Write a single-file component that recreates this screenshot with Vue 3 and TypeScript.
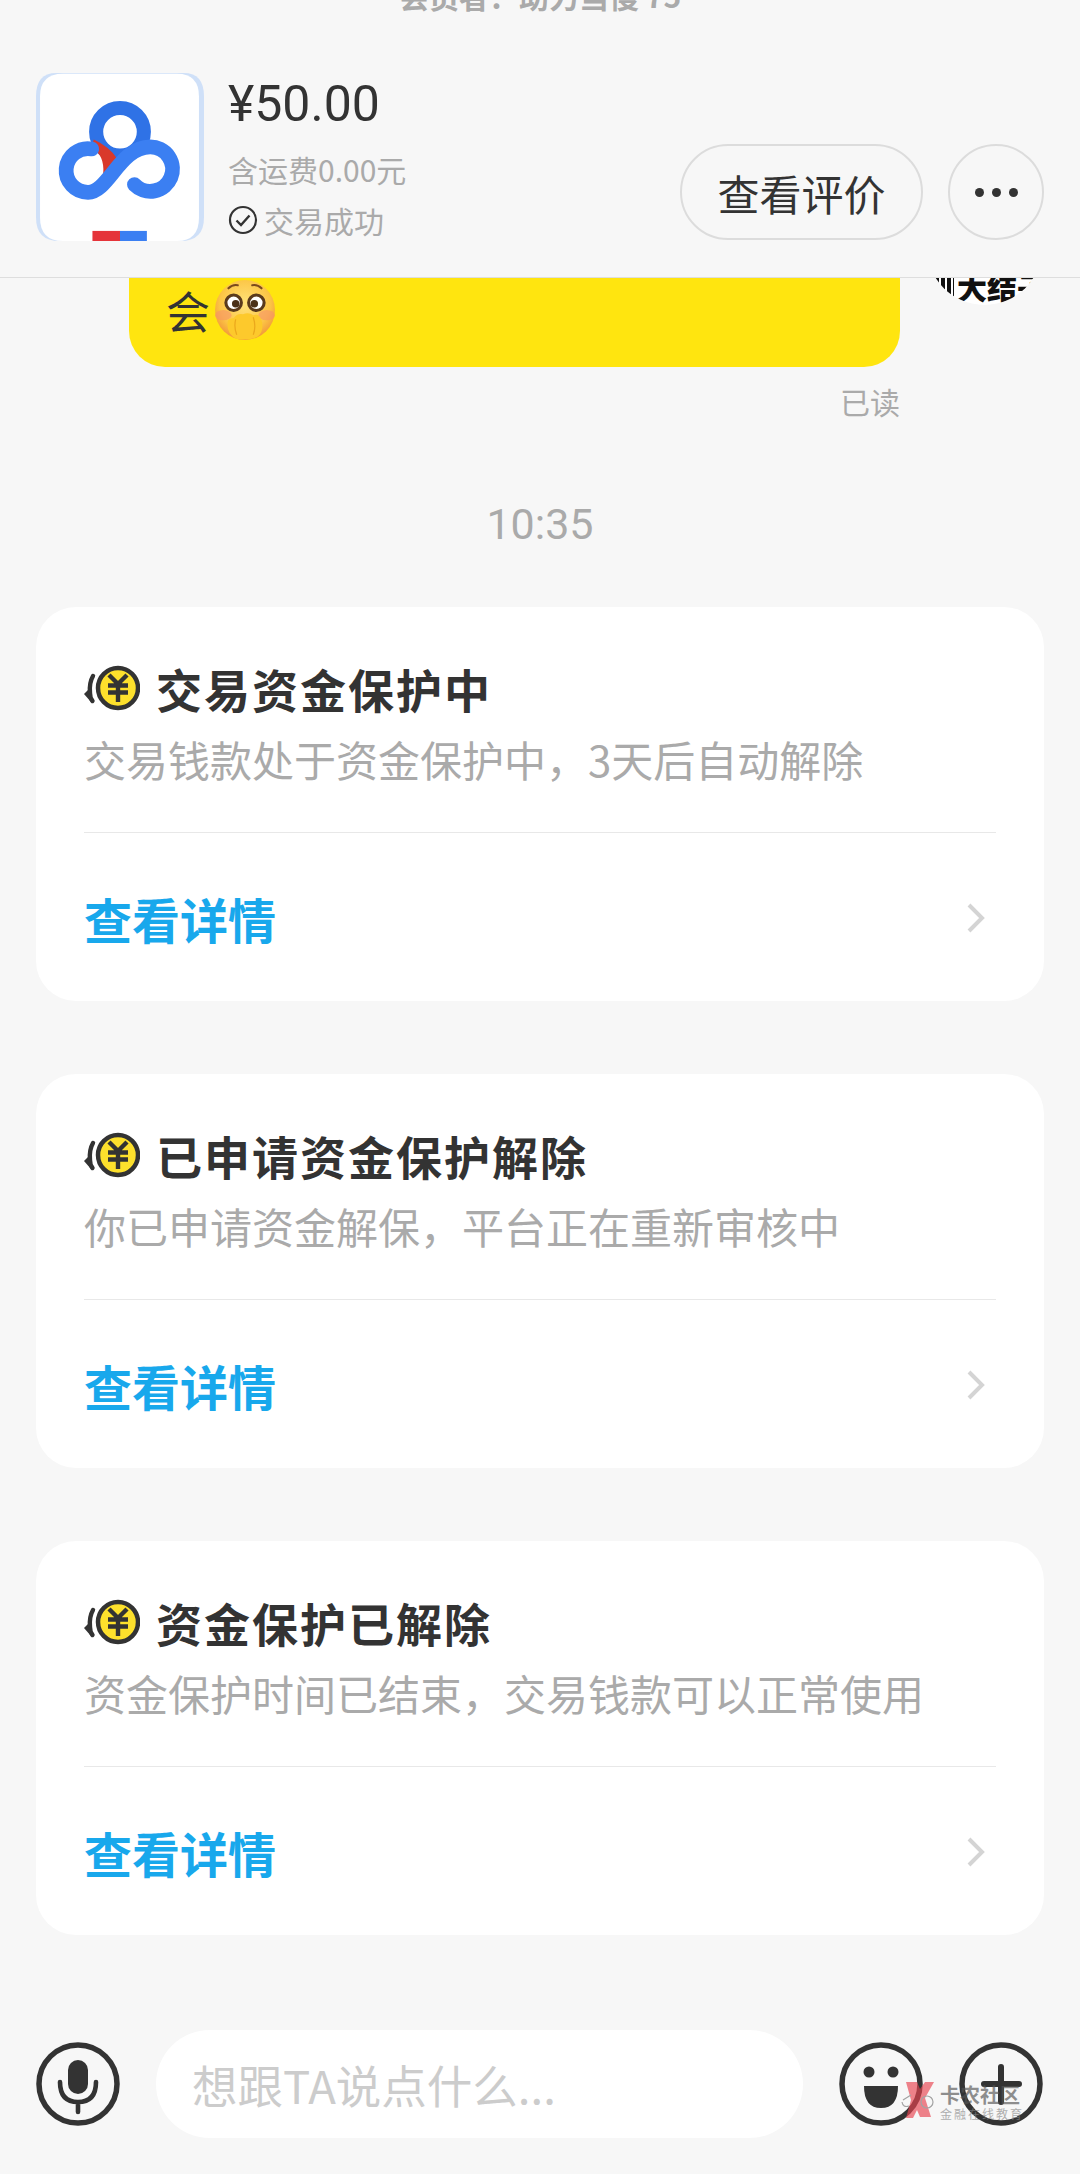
<template>
  <div class="page">
    <header class="order-bar">
      <p class="clipped-line">会员者：助力当慢 75</p>
      <div class="order-row">
        <svg class="product-logo" viewBox="50 40 500 500">
          <path d="M110 40H490Q550 40 550 110V470Q550 540 480 540H120Q50 540 50 470V110Q50 40 110 40Z" fill="#cfe0f8" />
          <path d="M130 42H470Q535 42 535 110V470Q535 540 470 540H130Q62 540 62 470V110Q62 42 130 42Z" fill="#fff" />
          <circle cx="300" cy="215" r="71" fill="none" stroke="#2f72e6" stroke-width="42" />
          <path d="M222 238Q270 260 292 296L250 340Q255 285 215 262Z" fill="#d9392b" />
          <path d="M216 266A65 65 0 1 0 205 395C265 395 300 260 390 260A66 66 0 1 1 343 372" fill="none" stroke="#3b7ff2" stroke-width="44" stroke-linecap="round" />
          <rect x="218" y="510" width="82" height="30" fill="#e5343a" />
          <rect x="300" y="510" width="80" height="30" fill="#3b7ff2" />
        </svg>
        <div class="order-info">
          <div class="price">¥50.00</div>
          <div class="freight">含运费0.00元</div>
          <div class="status">
            <svg class="status-icon" viewBox="0 0 30 30">
              <circle cx="15" cy="15" r="13" fill="none" stroke="#333" stroke-width="2.2" />
              <path d="M8.5 15.5L13 20L21.5 10.5" fill="none" stroke="#333" stroke-width="2.4" />
            </svg>
            <span>交易成功</span>
          </div>
        </div>
        <div class="order-actions">
          <button class="review-btn">查看评价</button>
          <button class="more-btn"><i /><i /><i /></button>
        </div>
      </div>
    </header>

    <main class="chat">
      <div class="message-row">
        <div class="bubble">
          <span>会</span>
          <svg class="emoji" viewBox="0 0 60 60">
            <defs>
              <radialGradient id="face" cx="50%" cy="40%" r="60%">
                <stop offset="0%" stop-color="#ffe27a" />
                <stop offset="70%" stop-color="#fcc545" />
                <stop offset="100%" stop-color="#f2983a" />
              </radialGradient>
            </defs>
            <circle cx="30" cy="30" r="29" fill="url(#face)" />
            <ellipse cx="9" cy="35" rx="8" ry="5" fill="#f7936b" opacity=".6" />
            <ellipse cx="51" cy="35" rx="8" ry="5" fill="#f7936b" opacity=".6" />
            <path d="M14 9Q18 5 23 6M37 6Q42 5 46 9" fill="none" stroke="#7a4a1c" stroke-width="2" stroke-linecap="round" />
            <circle cx="19" cy="23" r="7.5" fill="#fff" stroke="#5a3a1c" stroke-width="3" />
            <circle cx="41" cy="23" r="7.5" fill="#fff" stroke="#5a3a1c" stroke-width="3" />
            <circle cx="21" cy="24" r="3.6" fill="#4a3018" />
            <circle cx="39" cy="24" r="3.6" fill="#4a3018" />
            <path d="M13 44Q13 37 19 38Q22 33 28 34Q34 32 38 35Q44 33 46 40Q49 50 42 56Q34 60 22 58Q13 54 13 44Z" fill="#fdc92c" />
            <path d="M21 39Q19 46 22 54M38 37Q41 46 38 54" fill="none" stroke="#eba81c" stroke-width="1.2" />
          </svg>
        </div>
        <div class="avatar">
          <i class="avatar-stripes" />
          <span>大结子</span>
        </div>
      </div>
      <div class="read-mark">已读</div>
      <div class="time-mark">10:35</div>

      <section v-for="card in cards" :key="card.title" class="notice-card">
        <div class="notice-title">
          <svg class="coin" viewBox="0 0 56 46">
            <path d="M9 11Q5 18 6 28Q6 33 8.5 36" fill="none" stroke="#333" stroke-width="4.4" stroke-linecap="round" />
            <path d="M0 29L7 22V37Z" fill="#333" />
            <circle cx="34" cy="23" r="20" fill="#fde02c" stroke="#333" stroke-width="4.5" />
            <path d="M25 10L34 19L43 10M24 20.5H44M24 27.5H44M34 19V37" fill="none" stroke="#333" stroke-width="4.4" />
          </svg>
          <h2>{{ card.title }}</h2>
        </div>
        <p class="notice-desc">{{ card.desc }}</p>
        <div class="notice-link">
          <span>查看详情</span>
          <svg class="chevron" viewBox="0 0 20 32">
            <path d="M3 3L16 16L3 29" fill="none" stroke="#d4d4d4" stroke-width="4" />
          </svg>
        </div>
      </section>
    </main>

    <footer class="input-bar">
      <svg class="round-icon" viewBox="0 0 84 84">
        <circle cx="42" cy="42" r="39" fill="none" stroke="#333" stroke-width="5.5" />
        <rect x="32" y="18" width="20" height="34" rx="10" fill="#333" />
        <path d="M24 40Q24 60 42 60Q60 60 60 40M42 60V70" fill="none" stroke="#333" stroke-width="4.6" stroke-linecap="round" />
      </svg>
      <div class="input-box">想跟TA说点什么...</div>
      <svg class="round-icon face-icon" viewBox="0 0 84 84">
        <circle cx="42" cy="42" r="39" fill="none" stroke="#333" stroke-width="5.5" />
        <circle cx="30" cy="30" r="5.5" fill="#333" />
        <circle cx="54" cy="30" r="5.5" fill="#333" />
        <path d="M25 44H59Q59 66 42 66Q25 66 25 44Z" fill="#333" />
      </svg>
      <svg class="round-icon" viewBox="0 0 84 84">
        <circle cx="42" cy="42" r="39" fill="none" stroke="#333" stroke-width="5.5" />
        <path d="M42 25V60M25 42H60" fill="none" stroke="#333" stroke-width="6" stroke-linecap="round" />
      </svg>

      <div class="watermark">
        <svg class="watermark-mark" viewBox="0 0 34 40">
          <path d="M5 2H16L19 9L24 2H33L24 18L30 37H19L16 30L12 38H5L10 20Z" fill="#e8434f" />
          <path d="M2 20L10 15M8 26Q2 28 1 22M20 22A6 6 0 1 0 32 22A6 6 0 1 0 20 22" fill="none" stroke="#777" stroke-width="1.2" />
        </svg>
        <div class="watermark-text">
          <div class="watermark-name">卡农社区</div>
          <div class="watermark-sub">金融在线教育</div>
        </div>
      </div>
    </footer>
  </div>
</template>

<script setup lang="ts">
const cards = [
  { title: '交易资金保护中', desc: '交易钱款处于资金保护中，3天后自动解除' },
  { title: '已申请资金保护解除', desc: '你已申请资金解保，平台正在重新审核中' },
  { title: '资金保护已解除', desc: '资金保护时间已结束，交易钱款可以正常使用' },
]
</script>

<style>
html,
body {
  margin: 0;
  background: #f7f7f7;
}
</style>

<style scoped>
.page {
  position: relative;
  width: 1080px;
  height: 2174px;
  overflow: hidden;
  background: #f7f7f7;
  font-family: "Noto Sans CJK SC", "Noto Sans", sans-serif;
  color: #333;
}

.order-bar {
  display: flow-root;
  height: 278px;
  box-sizing: border-box;
  border-bottom: 1px solid #dedede;
  padding: 0 36px;
  position: relative;
  z-index: 1;
  background: #f7f7f7;
}

.clipped-line {
  margin: -25px 0 0;
  height: 40px;
  line-height: 40px;
  font-size: 30px;
  text-align: center;
  color: #aaa;
  font-weight: 700;
}

.order-row {
  display: flex;
  margin-top: 58px;
}

.product-logo {
  width: 168px;
  height: 168px;
  flex: none;
}

.order-info {
  margin-left: 24px;
  flex: 1;
}

.price {
  font-family: Roboto, sans-serif;
  font-size: 50px;
  line-height: 60px;
  margin-top: 1px;
}

.freight {
  font-size: 30px;
  line-height: 40px;
  color: #aaa;
  margin-top: 15px;
}

.status {
  display: flex;
  align-items: center;
  gap: 6px;
  margin-top: 11px;
  font-size: 30px;
  line-height: 40px;
  color: #aaa;
}

.status-icon {
  width: 30px;
  height: 30px;
}

.order-actions {
  display: flex;
  gap: 25px;
  margin-top: 71px;
}

.review-btn,
.more-btn {
  height: 96px;
  border: 2px solid #dcdcdc;
  border-radius: 48px;
  background: transparent;
  color: #333;
  font-family: inherit;
  padding: 0;
}

.review-btn {
  width: 243px;
  font-size: 42px;
}

.more-btn {
  width: 96px;
  display: flex;
  align-items: center;
  justify-content: center;
  gap: 8px;
}

.more-btn i {
  width: 9px;
  height: 9px;
  border-radius: 50%;
  background: #333;
}

.chat {
  padding: 0 36px;
}

.message-row {
  display: flex;
  height: 89px;
}

.bubble {
  width: 771px;
  margin-left: 93px;
  height: 89px;
  box-sizing: border-box;
  padding: 0 0 26px 37px;
  background: #ffe50f;
  border-radius: 0 0 36px 36px;
  display: flex;
  align-items: center;
  font-size: 44px;
  color: #333;
}

.emoji {
  width: 62px;
  height: 62px;
  margin-left: 4px;
  flex: none;
}

.avatar {
  width: 115px;
  height: 115px;
  margin: -88px 0 0 27px;
  box-sizing: border-box;
  padding: 76px 0 0 8px;
  border-radius: 50%;
  background: #fff;
  display: flex;
  gap: 3px;
  font-size: 30px;
  line-height: 40px;
  font-weight: 900;
  color: #111;
  overflow: hidden;
  white-space: nowrap;
  flex: none;
}

.avatar-stripes {
  width: 19px;
  height: 40px;
  flex: none;
  background: repeating-linear-gradient(90deg, #111 0 4px, #fff 4px 6px);
}

.read-mark {
  margin: 13px 144px 0 0;
  text-align: right;
  font-size: 30px;
  line-height: 42px;
  color: #aaa;
}

.time-mark {
  margin-top: 77px;
  text-align: center;
  font-family: Roboto, sans-serif;
  font-size: 43px;
  line-height: 50px;
  color: #aaa;
}

.notice-card {
  height: 394px;
  box-sizing: border-box;
  margin: 58px 0 0;
  padding: 50px 48px 0;
  background: #fff;
  border-radius: 40px;
  overflow: hidden;
}

.notice-card + .notice-card {
  margin-top: 73px;
}

.notice-title {
  display: flex;
  align-items: center;
  height: 62px;
  gap: 16px;
}

.coin {
  width: 56px;
  height: 46px;
  flex: none;
}

.notice-title h2 {
  margin: 0;
  font-size: 46px;
  font-weight: 700;
  line-height: 62px;
  letter-spacing: 2px;
  color: #333;
}

.notice-desc {
  margin: 9px 0 0;
  padding-bottom: 42px;
  border-bottom: 1px solid #e8e8e8;
  font-size: 42px;
  line-height: 62px;
  color: #aaa;
  white-space: nowrap;
}

.notice-link {
  display: flex;
  align-items: center;
  justify-content: space-between;
  height: 64px;
  margin-top: 53px;
  padding-right: 10px;
  font-size: 48px;
  font-weight: 700;
  color: #18a8ec;
}

.chevron {
  width: 20px;
  height: 32px;
}

.input-bar {
  position: absolute;
  left: 36px;
  right: 36px;
  bottom: 36px;
  height: 108px;
  display: flex;
  align-items: center;
}

.round-icon {
  width: 84px;
  height: 84px;
  flex: none;
}

.input-box {
  width: 647px;
  height: 108px;
  margin-left: 36px;
  box-sizing: border-box;
  padding-left: 36px;
  background: #fff;
  border-radius: 54px;
  font-size: 45.5px;
  line-height: 108px;
  color: #ccc;
  flex: none;
}

.face-icon {
  margin: 0 36px;
}

.watermark {
  position: absolute;
  left: 865px;
  top: 50px;
  display: flex;
  align-items: flex-start;
  gap: 5px;
  opacity: 0.65;
}

.watermark-mark {
  width: 34px;
  height: 40px;
}

.watermark-text {
  margin-top: 4px;
}

.watermark-name {
  font-size: 20px;
  line-height: 22px;
  font-weight: 700;
  color: #555;
}

.watermark-sub {
  font-size: 12px;
  line-height: 16px;
  letter-spacing: 2px;
  color: #888;
}
</style>
